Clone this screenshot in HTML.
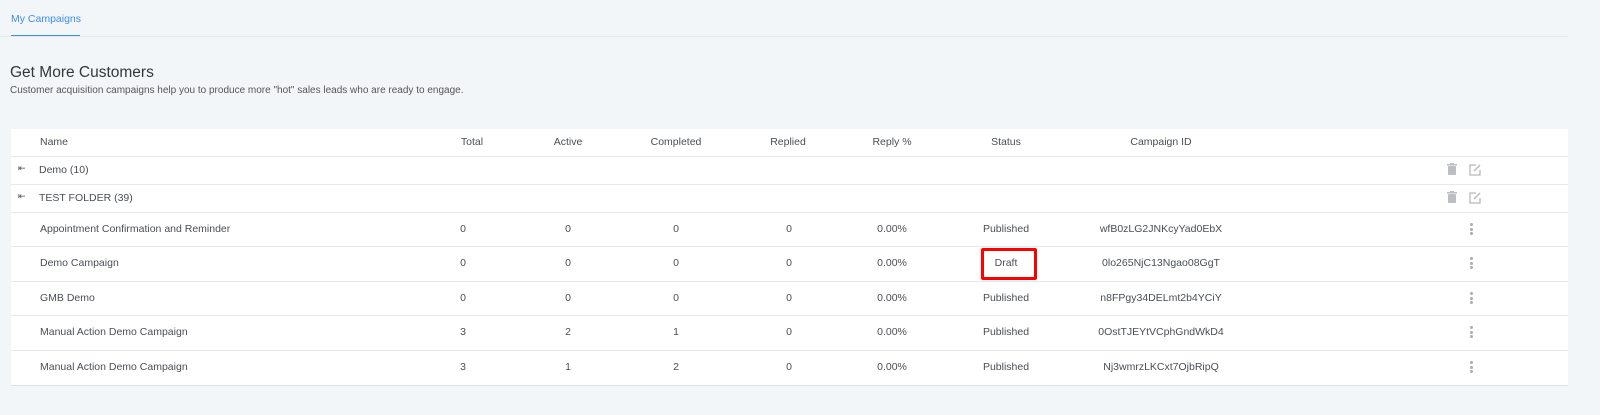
<!DOCTYPE html>
<html><head><style>
body{margin:0;width:1600px;height:415px;background:#f3f6f9;font-family:"Liberation Sans",sans-serif;color:#4a4f55;position:relative;overflow:hidden;font-size:10.5px}
.a{position:absolute;white-space:nowrap}
.c{transform:translateX(-50%)}
.tab{left:11px;top:13px;color:#3b8df2;font-size:10.5px}
.tabline{left:11px;top:35px;width:69px;height:2px;background:#3b8df2}
.hr{left:0;top:36px;width:1568px;height:1px;background:#e3e8ec}
.tbl{left:11px;top:129px;width:1557px;height:257px;background:#fff}
.ln{left:11px;width:1557px;height:1px;background:#e6e8ea}
.dots{width:3px}
.dots i{display:block;width:3px;height:3px;border-radius:50%;background:#a9adb2;margin-bottom:1.5px}
</style></head><body>
<div class="a tab">My Campaigns</div>
<div class="a tabline"></div>
<div class="a hr"></div>
<div class="a" style="left:10px;top:64px;font-size:15.5px;color:#33373b">Get More Customers</div>
<div class="a" style="left:10px;top:85px;font-size:10px;color:#555">Customer acquisition campaigns help you to produce more "hot" sales leads who are ready to engage.</div>
<div class="a tbl"></div>
<div class="a ln" style="top:156px"></div>
<div class="a ln" style="top:184px"></div>
<div class="a ln" style="top:212px"></div>
<div class="a ln" style="top:246px"></div>
<div class="a ln" style="top:281px"></div>
<div class="a ln" style="top:315px"></div>
<div class="a ln" style="top:350px"></div>
<div class="a ln" style="top:385px;background:#dde1e5"></div>

<div class="a" style="left:40px;top:136px">Name</div>
<div class="a c" style="left:472px;top:136px">Total</div>
<div class="a c" style="left:568px;top:136px">Active</div>
<div class="a c" style="left:676px;top:136px">Completed</div>
<div class="a c" style="left:788px;top:136px">Replied</div>
<div class="a c" style="left:892px;top:136px">Reply %</div>
<div class="a c" style="left:1006px;top:136px">Status</div>
<div class="a c" style="left:1161px;top:136px">Campaign ID</div>

<div class="a" style="left:18px;top:163px;font-size:9px">&#x21E4;</div>
<div class="a" style="left:39px;top:164px">Demo (10)</div>
<div class="a" style="left:18px;top:191px;font-size:9px">&#x21E4;</div>
<div class="a" style="left:39px;top:192px">TEST FOLDER (39)</div>

<svg class="a" style="left:1446px;top:163px" width="36" height="13" viewBox="0 0 36 13"><g fill="#bbbec2"><rect x="1" y="1" width="10" height="1.5"/><rect x="4" y="0" width="4" height="1.5"/><rect x="2" y="3" width="8" height="9" rx="1"/></g><g fill="none" stroke="#b5b8bc" stroke-width="1.3"><path d="M30 2H24v10h10V7"/><path d="M28 8l6-6"/></g></svg>
<svg class="a" style="left:1446px;top:191px" width="36" height="13" viewBox="0 0 36 13"><g fill="#bbbec2"><rect x="1" y="1" width="10" height="1.5"/><rect x="4" y="0" width="4" height="1.5"/><rect x="2" y="3" width="8" height="9" rx="1"/></g><g fill="none" stroke="#b5b8bc" stroke-width="1.3"><path d="M30 2H24v10h10V7"/><path d="M28 8l6-6"/></g></svg>

<div id="rows"></div>
<div class="a" style="left:981px;top:248px;width:50px;height:26px;border:3px solid #f00;border-radius:2px"></div>
<script>
var d=[["Appointment Confirmation and Reminder","0","0","0","0","Published","wfB0zLG2JNKcyYad0EbX",229],
["Demo Campaign","0","0","0","0","Draft","0lo265NjC13Ngao08GgT",263],
["GMB Demo","0","0","0","0","Published","n8FPgy34DELmt2b4YCiY",298],
["Manual Action Demo Campaign","3","2","1","0","Published","0OstTJEYtVCphGndWkD4",332],
["Manual Action Demo Campaign","3","1","2","0","Published","Nj3wmrzLKCxt7OjbRipQ",367]];
var h="";d.forEach(function(r){var y=r[7]-6;
h+='<div class="a" style="left:40px;top:'+y+'px">'+r[0]+'</div>';
h+='<div class="a c" style="left:463px;top:'+y+'px">'+r[1]+'</div>';
h+='<div class="a c" style="left:568px;top:'+y+'px">'+r[2]+'</div>';
h+='<div class="a c" style="left:676px;top:'+y+'px">'+r[3]+'</div>';
h+='<div class="a c" style="left:789px;top:'+y+'px">'+r[4]+'</div>';
h+='<div class="a c" style="left:892px;top:'+y+'px">0.00%</div>';
h+='<div class="a c" style="left:1006px;top:'+y+'px">'+r[5]+'</div>';
h+='<div class="a c" style="left:1161px;top:'+y+'px">'+r[6]+'</div>';
h+='<div class="a dots" style="left:1470px;top:'+(r[7]-6)+'px"><i></i><i></i><i></i></div>';});
document.getElementById("rows").outerHTML=h;
</script>
</body></html>
